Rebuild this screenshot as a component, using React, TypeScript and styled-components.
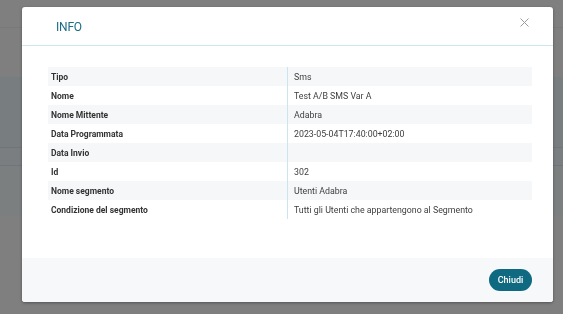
import React from "react";
import styled, { createGlobalStyle } from "styled-components";

const GlobalStyle = createGlobalStyle`
  html, body { margin: 0; padding: 0; }
  body {
    width: 563px;
    height: 314px;
    overflow: hidden;
    background: #7f7f7f;
    font-family: Roboto, "Liberation Sans", Arial, sans-serif;
  }
`;

const Page = styled.div`
  display: flex;
  flex-direction: column;
  height: 314px;
`;

const Band = styled.div<{ $h: number; $bg: string; $line?: string }>`
  height: ${(p) => p.$h}px;
  flex: none;
  background: ${(p) => p.$bg};
  border-bottom: ${(p) => (p.$line ? `1px solid ${p.$line}` : "none")};
`;

const Overlay = styled.div`
  position: fixed;
  inset: 0;
  display: flex;
  align-items: flex-start;
  justify-content: flex-start;
  padding: 7px 0 0 22px;
`;

const Modal = styled.div`
  width: 531px;
  height: 295px;
  background: #ffffff;
  border-radius: 3px;
  box-shadow: 0 1px 3px rgba(0, 0, 0, 0.35);
  display: flex;
  flex-direction: column;
  overflow: hidden;
`;

const Header = styled.div`
  height: 38px;
  flex: none;
  border-bottom: 1px solid #cde7ef;
  display: flex;
  align-items: center;
  justify-content: space-between;
  padding: 0 24px 0 34px;
`;

const Title = styled.h2`
  margin: 2px 0 0;
  font-size: 12px;
  font-weight: 400;
  letter-spacing: -0.2px;
  color: #1b6b84;
`;

const Close = styled.button`
  border: 0;
  background: none;
  padding: 0;
  width: 9px;
  height: 9px;
  margin-top: -8px;
  display: flex;
  cursor: pointer;
`;

const Body = styled.div`
  flex: 1;
  padding: 21px 21px 0 26px;
`;

const Table = styled.div`
  display: flex;
  flex-direction: column;
`;

const Row = styled.div<{ $odd: boolean }>`
  display: grid;
  grid-template-columns: 240px 1fr;
  height: 19px;
  background: ${(p) => (p.$odd ? "#f5f7f9" : "#ffffff")};
`;

const Label = styled.div`
  border-right: 1px solid #c9e6f0;
  padding-left: 3px;
  display: flex;
  align-items: center;
  font-size: 8.5px;
  font-weight: 700;
  color: #333;
`;

const Value = styled.div`
  padding-left: 6px;
  display: flex;
  align-items: center;
  font-size: 8.8px;
  font-weight: 400;
  color: #404040;
`;

const Footer = styled.div`
  height: 44px;
  flex: none;
  background: #f6f8fa;
  display: flex;
  align-items: center;
  justify-content: flex-end;
  padding-right: 21px;
`;

const Button = styled.button`
  width: 43px;
  height: 22px;
  border: 0;
  border-radius: 11px;
  background: #0f6a81;
  color: #fff;
  font-family: Roboto, "Liberation Sans", Arial, sans-serif;
  font-size: 9px;
  font-weight: 500;
  padding: 0;
  cursor: pointer;
`;

const rows: [string, string][] = [
  ["Tipo", "Sms"],
  ["Nome", "Test A/B SMS Var A"],
  ["Nome Mittente", "Adabra"],
  ["Data Programmata", "2023-05-04T17:40:00+02:00"],
  ["Data Invio", ""],
  ["Id", "302"],
  ["Nome segmento", "Utenti Adabra"],
  ["Condizione del segmento", "Tutti gli Utenti che appartengono al Segmento"],
];

export default function App() {
  return (
    <>
      <GlobalStyle />
      <Page>
        <Band $h={27} $bg="#7f7f7f" $line="#797979" />
        <Band $h={49} $bg="#7f7f7f" />
        <Band $h={70} $bg="#787d80" $line="#6f767a" />
        <Band $h={17} $bg="#7a7e80" $line="#6f767a" />
        <Band $h={50} $bg="#7b7f80" />
        <Band $h={99} $bg="#7f7f7f" />
      </Page>
      <Overlay>
        <Modal>
          <Header>
            <Title>INFO</Title>
            <Close aria-label="Chiudi">
              <svg width="9" height="9" viewBox="0 0 9 9">
                <path d="M0.5 0.5 L8.5 8.5 M8.5 0.5 L0.5 8.5" stroke="#9a9a9a" strokeWidth="1" fill="none" />
              </svg>
            </Close>
          </Header>
          <Body>
            <Table>
              {rows.map(([k, v], i) => (
                <Row key={k} $odd={i % 2 === 0}>
                  <Label>{k}</Label>
                  <Value>{v}</Value>
                </Row>
              ))}
            </Table>
          </Body>
          <Footer>
            <Button>Chiudi</Button>
          </Footer>
        </Modal>
      </Overlay>
    </>
  );
}
